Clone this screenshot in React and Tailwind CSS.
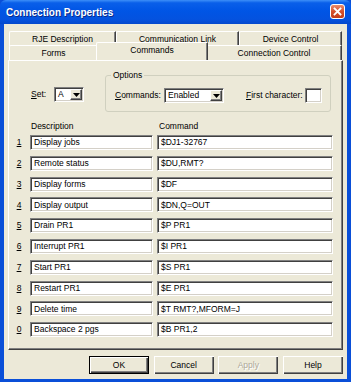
import React from "react";

const rows = [
  ["1", "Display jobs", "$DJ1-32767"],
  ["2", "Remote status", "$DU,RMT?"],
  ["3", "Display forms", "$DF"],
  ["4", "Display output", "$DN,Q=OUT"],
  ["5", "Drain PR1", "$P PR1"],
  ["6", "Interrupt PR1", "$I PR1"],
  ["7", "Start PR1", "$S PR1"],
  ["8", "Restart PR1", "$E PR1"],
  ["9", "Delete time", "$T RMT?,MFORM=J"],
  ["0", "Backspace 2 pgs", "$B PR1,2"],
];

const sunken =
  "bg-white border border-t-[#808080] border-l-[#808080] border-b-white border-r-white shadow-[inset_1px_1px_0_#404040,inset_-1px_-1px_0_#d4d0c8]";

function Arrow() {
  return (
    <div className="w-[12px] h-full bg-[#ece9d8] border border-t-white border-l-white border-b-[#404040] border-r-[#404040] shadow-[inset_-1px_-1px_0_#808080] flex items-center justify-center">
      <svg width="7" height="4" viewBox="0 0 7 4">
        <path d="M0 0H7L3.5 4Z" fill="#000" />
      </svg>
    </div>
  );
}

function Combo({ value, width }) {
  return (
    <div className={`${sunken} h-[15px] flex items-stretch p-[1px] shrink-0`} style={{ width }}>
      <div className="flex-1 pl-[2px] leading-[11px] flex items-center">{value}</div>
      <Arrow />
    </div>
  );
}

function Button({ children, isDefault, disabled }) {
  return (
    <div
      className={`w-[60px] h-[18px] flex items-center justify-center ${
        isDefault
          ? "border border-black shadow-[inset_1px_1px_0_#fff,inset_-1px_-1px_0_#404040,inset_-2px_-2px_0_#808080]"
          : "shadow-[inset_1px_1px_0_#fff,inset_-1px_-1px_0_#404040,inset_-2px_-2px_0_#808080]"
      } ${disabled ? "text-[#aca899] [text-shadow:1px_1px_0_#fff]" : "text-black"}`}
    >
      {children}
    </div>
  );
}

function Tab({ label, width, selected }) {
  return (
    <div
      className={`relative h-[15px] flex items-center justify-center bg-[#ece9d8] border-l border-t border-l-white border-t-white rounded-tl-[2px] shadow-[inset_-1px_0_0_#808080] border-r border-r-[#404040] whitespace-nowrap ${
        selected ? "z-10 h-[18px] -mt-[3px] -mx-[2px] -mb-[1px] border-b-0 pb-[2px]" : ""
      }`}
      style={{ width: selected ? width + 4 : width }}
    >
      {label}
    </div>
  );
}

export default function App() {
  return (
    <div
      className="w-[351px] h-[382px] flex flex-col bg-[#0a4fd8] text-[8.5px] text-black overflow-hidden whitespace-nowrap"
      style={{ fontFamily: '"Liberation Sans", Arial, sans-serif' }}
    >
      {/* title bar */}
      <div className="h-[24px] shrink-0 flex items-center pl-[6px] pr-[6px] rounded-t-[6px] bg-[linear-gradient(to_bottom,#3d8ff8_0%,#0a5fe9_12%,#0055e5_45%,#0452df_80%,#0348cc_100%)]">
        <div className="flex-1 text-white font-bold text-[10px] [text-shadow:1px_1px_0_#0a2a8a]">
          Connection Properties
        </div>
        <div className="w-[15px] h-[15px] -mt-[1px] rounded-[3px] border border-white bg-[linear-gradient(to_bottom,#ea8c6e,#d4502c_50%,#c23b19)] flex items-center justify-center">
          <svg width="9" height="9" viewBox="0 0 9 9">
            <path d="M1.5 1.5L7.5 7.5M7.5 1.5L1.5 7.5" stroke="#fff" strokeWidth="1.8" strokeLinecap="square" />
          </svg>
        </div>
      </div>

      {/* client */}
      <div className="flex-1 mx-[4px] mb-[3px] bg-[#ece9d8] flex flex-col px-[4px]">
        {/* tabs */}
        <div className="pl-[1px] pt-[7px] flex flex-col">
          <div className="flex">
            <Tab label="RJE Description" width={107} />
            <Tab label="Communication Link" width={123} />
            <Tab label="Device Control" width={103} />
          </div>
          <div className="flex -mt-[1px]">
            <Tab label="Forms" width={89} />
            <Tab label="Commands" width={108} selected />
            <Tab label="Connection Control" width={136} />
          </div>
        </div>

        {/* panel */}
        <div className="h-[290px] border border-t-white border-l-white border-r-[#404040] border-b-[#404040] shadow-[inset_-1px_-1px_0_#808080] flex flex-col pl-[1px]">
          <div className="flex items-start mt-[14px]">
            <div className="flex items-center mt-[12px] ml-[21px]">
              <span className="w-[23px]">
                <u>S</u>et:
              </span>
              <Combo value="A" width={30} />
            </div>
            <div className="relative ml-[21px] w-[226px] h-[37px] border border-[#d0d0bf] rounded-[3px] flex items-center shrink-0">
              <span className="absolute -top-[6px] left-[5px] px-[2px] bg-[#ece9d8] leading-[11px]">Options</span>
              <div className="flex items-center mt-[4px] pl-[9px]">
                <span className="w-[49px]">
                  <u>C</u>ommands:
                </span>
                <Combo value="Enabled" width={60} />
                <span className="ml-[22px] w-[59px]">
                  <u>F</u>irst character:
                </span>
                <div className={`${sunken} w-[17px] h-[15px] shrink-0`} />
              </div>
            </div>
          </div>

          <div className="flex mt-[9px] h-[11px] leading-[11px]">
            <span className="ml-[21px] w-[128px]">Description</span>
            <span>Command</span>
          </div>

          <div className="flex flex-col mt-[3px] gap-[5.8px]">
            {rows.map(([n, d, c]) => (
              <div key={n} className="flex items-center h-[15px]">
                <span className="w-[18px] text-center">
                  <u>{n}</u>
                </span>
                <div className={`${sunken} ml-[2px] w-[123px] h-[15px] pl-[3px] flex items-center`}>{d}</div>
                <div className={`${sunken} ml-[4px] w-[176px] h-[15px] pl-[3px] flex items-center`}>{c}</div>
              </div>
            ))}
          </div>
        </div>

        {/* buttons */}
        <div className="flex justify-end gap-[4.7px] mt-[6px]">
          <Button isDefault>OK</Button>
          <Button>Cancel</Button>
          <Button disabled>Apply</Button>
          <Button>Help</Button>
        </div>
      </div>
    </div>
  );
}
